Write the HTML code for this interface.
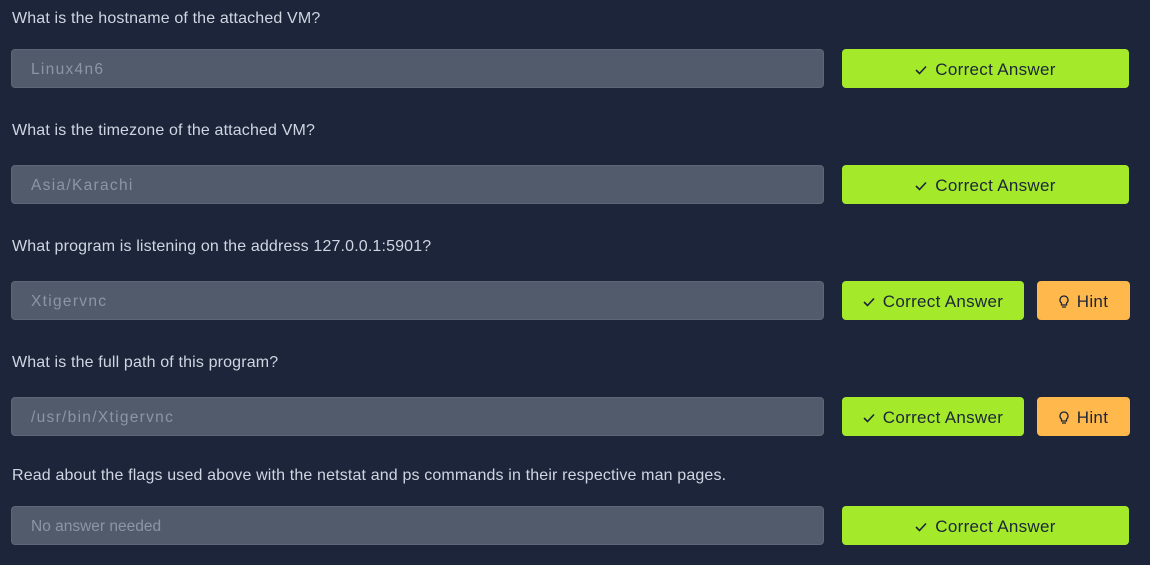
<!DOCTYPE html>
<html><head><meta charset="utf-8"><style>
*{box-sizing:border-box;margin:0;padding:0}
body{width:1150px;height:565px;background:#1c2539;font-family:"Liberation Sans",sans-serif;position:relative;overflow:hidden}
.q{position:absolute;left:12px;color:#cfd6e2;font-size:16px;letter-spacing:0.15px;white-space:nowrap}
.in{position:absolute;left:11px;width:813px;height:39px;background:#525b6b;border:1px solid #5e6777;border-radius:4px;color:#8c95a5;font-size:15.5px;padding-left:19px;line-height:39px}
.mono{letter-spacing:1.3px}
.b{position:absolute;height:39px;border-radius:4px;color:#1c2539;font-size:17px;letter-spacing:0.3px;display:flex;align-items:center;justify-content:center;gap:8px;padding-top:2px}
.g{background:#a4ea2a}
.h{background:#ffb84b;left:1037px;width:93px}
svg{display:block}
</style></head><body>
<div class="q" style="top:10px">What is the hostname of the attached VM?</div>
<div class="in mono" style="top:49px">Linux4n6</div>
<div class="b g" style="top:49px;left:842px;width:287px"><svg width="12" height="10" viewBox="0 0 12 10"><path d="M1 5l3.5 3.5L11 1.5" fill="none" stroke="#1c2539" stroke-width="1.6"/></svg>Correct Answer</div>

<div class="q" style="top:122px">What is the timezone of the attached VM?</div>
<div class="in mono" style="top:165px">Asia/Karachi</div>
<div class="b g" style="top:165px;left:842px;width:287px"><svg width="12" height="10" viewBox="0 0 12 10"><path d="M1 5l3.5 3.5L11 1.5" fill="none" stroke="#1c2539" stroke-width="1.6"/></svg>Correct Answer</div>

<div class="q" style="top:238px">What program is listening on the address 127.0.0.1:5901?</div>
<div class="in mono" style="top:281px">Xtigervnc</div>
<div class="b g" style="top:281px;left:842px;width:182px"><svg width="12" height="10" viewBox="0 0 12 10"><path d="M1 5l3.5 3.5L11 1.5" fill="none" stroke="#1c2539" stroke-width="1.6"/></svg>Correct Answer</div>
<div class="b h" style="top:281px"><svg width="10" height="14" viewBox="0 0 10 14"><path d="M5 1a4 4 0 0 0-2.5 7.1V10h5V8.1A4 4 0 0 0 5 1zM3 12h4" fill="none" stroke="#1c2539" stroke-width="1.3"/></svg>Hint</div>

<div class="q" style="top:354px">What is the full path of this program?</div>
<div class="in mono" style="top:397px">/usr/bin/Xtigervnc</div>
<div class="b g" style="top:397px;left:842px;width:182px"><svg width="12" height="10" viewBox="0 0 12 10"><path d="M1 5l3.5 3.5L11 1.5" fill="none" stroke="#1c2539" stroke-width="1.6"/></svg>Correct Answer</div>
<div class="b h" style="top:397px"><svg width="10" height="14" viewBox="0 0 10 14"><path d="M5 1a4 4 0 0 0-2.5 7.1V10h5V8.1A4 4 0 0 0 5 1zM3 12h4" fill="none" stroke="#1c2539" stroke-width="1.3"/></svg>Hint</div>

<div class="q" style="top:467px">Read about the flags used above with the netstat and ps commands in their respective man pages.</div>
<div class="in" style="top:506px">No answer needed</div>
<div class="b g" style="top:506px;left:842px;width:287px"><svg width="12" height="10" viewBox="0 0 12 10"><path d="M1 5l3.5 3.5L11 1.5" fill="none" stroke="#1c2539" stroke-width="1.6"/></svg>Correct Answer</div>
</body></html>
